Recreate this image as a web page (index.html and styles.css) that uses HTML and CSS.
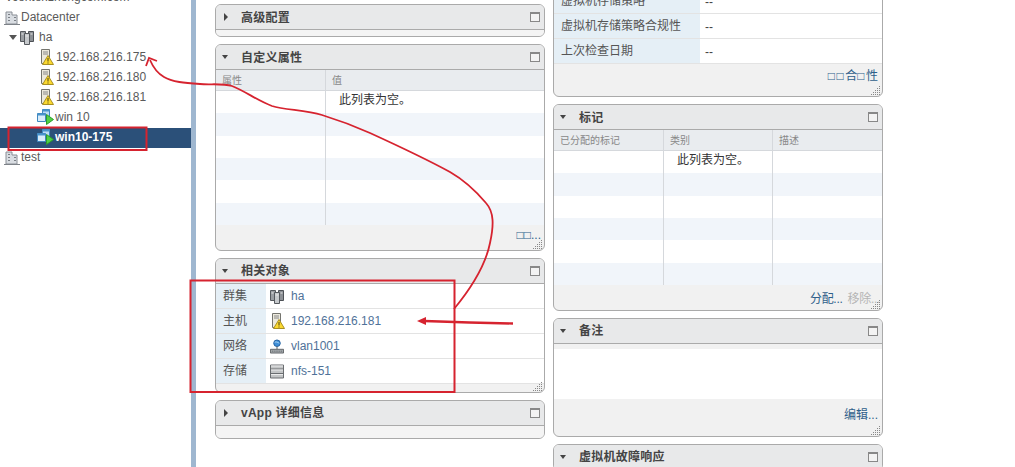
FILE: index.html
```html
<!DOCTYPE html>
<html lang="zh">
<head>
<meta charset="utf-8">
<title>vSphere</title>
<link rel="stylesheet" href="styles.css">
</head>
<body>
<svg class="defs" width="0" height="0" aria-hidden="true">
  <symbol id="i-dc" viewBox="0 0 16 16">
    <path d="M2 15V3h6v3h5v9z" fill="#d9dde2" stroke="#8a8f96"/>
    <path d="M0 15.500h16" stroke="#7d8288"/>
    <path d="M4 5h2v1H4zM4 8h2v1H4zM4 11h2v1H4zM10 8h2v1h-2zM10 11h2v1h-2z" fill="#7a7f86"/>
  </symbol>
  <symbol id="i-cluster" viewBox="0 0 14 15">
    <path d="M.5 1.500h5v10h-5z" fill="#9a9ea3" stroke="#55595e"/>
    <path d="M8.500 1.500h5v10h-5z" fill="#8c9095" stroke="#4d5156"/>
    <path d="M4.500 3.500h5v11h-5z" fill="#c6c9cc" stroke="#55595e"/>
    <path d="M1.500 4h2M10.500 4h2M5.500 6h3" stroke="#e8e8e8"/>
  </symbol>
  <symbol id="i-host" viewBox="0 0 13 16">
    <path d="M.5 .5h8v14h-8z" fill="#ece9dd" stroke="#74746e"/>
    <path d="M2 3h5M2 5h5" stroke="#888"/>
    <path d="M7 6.500l5.500 9h-11z" fill="#fbd92f" stroke="#a98f22" stroke-linejoin="round"/>
    <path d="M7 9v3.500M7 13.500v1" stroke="#4a3f10"/>
  </symbol>
  <symbol id="i-vm" viewBox="0 0 17 16">
    <path d="M5.500 .5h7v7h-7z" fill="#bcdcf4" stroke="#3f86bf"/>
    <path d="M.5 4.500h8v8h-8z" fill="#d8ecfa" stroke="#3f86bf"/>
    <path d="M.5 4.500h8v2h-8zM5.500 .5h7v2h-7z" fill="#4a94cc"/>
    <path d="M9.500 5.500l7 5-7 5z" fill="#4fcf45" stroke="#2c9d2a" stroke-linejoin="round"/>
  </symbol>
  <symbol id="i-net" viewBox="0 0 15 15">
    <circle cx="7.500" cy="4" r="3.500" fill="#3f8fd8" stroke="#23609e"/>
    <path d="M5 3c2-1 3 0 5 1" stroke="#a9d3f3" fill="none"/>
    <path d="M7.500 7.500v3" stroke="#555"/>
    <path d="M.5 10.500h14v4H.5z" fill="#a8adb0" stroke="#5e6265"/>
    <path d="M2 12.500h11" stroke="#50555a" stroke-dasharray="1 1"/>
  </symbol>
  <symbol id="i-store" viewBox="0 0 14 14">
    <path d="M.5 .5h13v13H.5z" fill="#c3c5c6" stroke="#6a6d70"/>
    <path d="M1 4.500h12M1 9h12" stroke="#6a6d70"/>
    <path d="M1 1.500h12M1 5.500h12M1 10h12" stroke="#ececec"/>
  </symbol>
  <symbol id="i-grip" viewBox="0 0 10 10">
    <path d="M8 1h1v1H8zM6 3h1v1H6zM8 3h1v1H8zM4 5h1v1H4zM6 5h1v1H6zM8 5h1v1H8zM2 7h1v1H2zM4 7h1v1H4zM6 7h1v1H6zM8 7h1v1H8zM0 9h1v1H0zM2 9h1v1H2zM4 9h1v1H4zM6 9h1v1H6zM8 9h1v1H8z" fill="#888"/>
  </symbol>
</svg>

<div class="page">
  <aside class="tree">
    <div class="node node-root">vcenter.zhengcom.com</div>
    <div class="node node-l1"><svg class="tree-ic"><use href="#i-dc"/></svg>Datacenter</div>
    <div class="node node-l2"><span class="tw"></span><svg class="tree-ic-s"><use href="#i-cluster"/></svg>ha</div>
    <div class="node node-l3"><svg class="tree-ic-h"><use href="#i-host"/></svg>192.168.216.175</div>
    <div class="node node-l3"><svg class="tree-ic-h"><use href="#i-host"/></svg>192.168.216.180</div>
    <div class="node node-l3"><svg class="tree-ic-h"><use href="#i-host"/></svg>192.168.216.181</div>
    <div class="node node-vm"><svg class="tree-ic-v"><use href="#i-vm"/></svg>win 10</div>
    <div class="node node-vm selected"><svg class="tree-ic-v"><use href="#i-vm"/></svg>win10-175</div>
    <div class="node node-l1"><svg class="tree-ic"><use href="#i-dc"/></svg>test</div>
  </aside>
  <div class="splitter"></div>
  <main class="columns">
    <section class="col">
      <div class="panel">
        <header class="ph"><span class="tri-r"></span><h2>高级配置</h2><span class="max"></span></header>
        <div class="stub"></div>
      </div>
      <div class="panel">
        <header class="ph"><span class="tri-d"></span><h2>自定义属性</h2><span class="max"></span></header>
        <div class="grid grid-2 gh"><span>属性</span><span>值</span></div>
        <div class="grid grid-2 gr"><span></span><span class="empty">此列表为空。</span></div>
        <div class="grid grid-2 gr alt"><span></span><span></span></div>
        <div class="grid grid-2 gr"><span></span><span></span></div>
        <div class="grid grid-2 gr alt"><span></span><span></span></div>
        <div class="grid grid-2 gr"><span></span><span></span></div>
        <div class="grid grid-2 gr alt"><span></span><span></span></div>
        <footer class="pf f-custom"><a>□□...</a></footer>
        <svg class="grip"><use href="#i-grip"/></svg>
      </div>
      <div class="panel">
        <header class="ph"><span class="tri-d"></span><h2>相关对象</h2><span class="max"></span></header>
        <div class="kv"><div class="k">群集</div><div class="v"><svg class="v-ic"><use href="#i-cluster"/></svg><a>ha</a></div></div>
        <div class="kv"><div class="k">主机</div><div class="v"><svg class="v-ic-h"><use href="#i-host"/></svg><a>192.168.216.181</a></div></div>
        <div class="kv"><div class="k">网络</div><div class="v"><svg class="v-ic"><use href="#i-net"/></svg><a>vlan1001</a></div></div>
        <div class="kv"><div class="k">存储</div><div class="v"><svg class="v-ic"><use href="#i-store"/></svg><a>nfs-151</a></div></div>
        <div class="f-rel"></div>
        <svg class="grip"><use href="#i-grip"/></svg>
      </div>
      <div class="panel">
        <header class="ph"><span class="tri-r"></span><h2>vApp 详细信息</h2><span class="max"></span></header>
        <div class="stub-v"></div>
      </div>
    </section>
    <section class="col col-right">
      <div class="panel">
        <div class="kv kv-wide"><div class="k">虚拟机存储策略</div><div class="v">--</div></div>
        <div class="kv kv-wide"><div class="k">虚拟机存储策略合规性</div><div class="v">--</div></div>
        <div class="kv kv-wide"><div class="k">上次检查日期</div><div class="v">--</div></div>
        <footer class="pf f-top"><a><span class="box">□□</span>合<span class="box">□</span>性</a></footer>
        <svg class="grip"><use href="#i-grip"/></svg>
      </div>
      <div class="panel">
        <header class="ph"><span class="tri-d"></span><h2>标记</h2><span class="max"></span></header>
        <div class="grid grid-3 gh"><span>已分配的标记</span><span>类别</span><span>描述</span></div>
        <div class="grid grid-3 gr"><span></span><span class="empty">此列表为空。</span><span></span></div>
        <div class="grid grid-3 gr alt"><span></span><span></span><span></span></div>
        <div class="grid grid-3 gr"><span></span><span></span><span></span></div>
        <div class="grid grid-3 gr alt"><span></span><span></span><span></span></div>
        <div class="grid grid-3 gr"><span></span><span></span><span></span></div>
        <div class="grid grid-3 gr alt"><span></span><span></span><span></span></div>
        <footer class="pf f-tags"><a>分配...</a><a class="off">移除...</a></footer>
        <svg class="grip"><use href="#i-grip"/></svg>
      </div>
      <div class="panel">
        <header class="ph"><span class="tri-d"></span><h2>备注</h2><span class="max"></span></header>
        <div class="note-gap"></div>
        <div class="note"></div>
        <footer class="pf f-note"><a>编辑...</a></footer>
        <svg class="grip"><use href="#i-grip"/></svg>
      </div>
      <div class="panel">
        <header class="ph"><span class="tri-d"></span><h2>虚拟机故障响应</h2><span class="max"></span></header>
      </div>
    </section>
  </main>
</div>

<svg class="marks" viewBox="0 0 1015 467" aria-hidden="true">
  <g fill="none" stroke="#d6232f">
    <path class="m2" d="M8.500 127.500h138v22.500h-138z"/>
    <path class="m2" d="M190.500 280.500h264v111.500h-264z"/>
    <path class="m1" d="M454 309C468 292 485 268 490 243C494 225 494 212 486 203C475 190 464 180 450 172C428 160 405 149 370 133C352 125 335 119 322 115C305 110 285 110 272 106C258 101 245 91 232 86C222 83 210 85 200 84C185 83 172 82 164 77C157 73 153 67 150 60"/>
    <path class="m1" d="M146 66L149 58L157 61"/>
    <path class="m3" d="M513 323.500C480 323 450 322 424 321"/>
  </g>
  <path d="M417 321L426 317V325Z" fill="#d6232f"/>
</svg>
</body>
</html>
```

FILE: styles.css
```css
html, body {
  margin: 0;
  height: 467px;
  overflow: hidden;
  background: #fff;
}
body {
  position: relative;
  font-family: "Liberation Sans", "Noto Sans CJK SC", sans-serif;
  font-size: 12px;
  color: #555;
}
.defs { position: absolute; }
.page { display: flex; height: 467px; overflow: hidden; }

/* tree */
.tree { width: 191px; flex: none; margin-top: -13px; }
.node {
  display: flex;
  align-items: center;
  height: 20px;
  white-space: nowrap;
  color: #5a5a5a;
}
.node-root { padding-left: 6px; }
.node-l1 { padding-left: 4px; }
.node-l2 { padding-left: 9px; }
.node-l3 { padding-left: 41px; }
.node-vm { padding-left: 37px; }
.selected {
  box-sizing: border-box;
  margin: 1px 0 -1px;
  padding-bottom: 2px;
  background: #2b5079;
  color: #fff;
  font-weight: bold;
}
.tree-ic { width: 16px; height: 16px; margin-right: 1px; }
.tree-ic-s { width: 14px; height: 15px; margin-right: 5px; }
.tree-ic-h { width: 13px; height: 16px; margin-right: 2px; }
.tree-ic-v { width: 17px; height: 16px; margin-right: 1px; }
.tw {
  width: 0; height: 0;
  margin-right: 3px;
  border-left: 4px solid transparent;
  border-right: 4px solid transparent;
  border-top: 5px solid #555;
}
.splitter { width: 5px; flex: none; background: #9fb7d0; }

/* columns */
.columns { display: flex; gap: 8px; padding: 4px 0 0 19px; align-items: flex-start; }
.col { width: 330px; flex: none; display: flex; flex-direction: column; gap: 7px; }
.col-right { margin-top: -16px; }

/* panels */
.panel {
  position: relative;
  flex: none;
  background: #f1f1f1;
  border: 1px solid #aaa;
  border-radius: 6px;
  overflow: hidden;
}
.ph {
  display: flex;
  align-items: center;
  height: 24px;
  padding: 0 3px 0 6px;
  background: #e8e9ea;
  border-bottom: 1px solid #aaa;
}
.ph h2 {
  flex: 1;
  margin: 0 0 2px 13px;
  font-size: 12px;
  letter-spacing: .25px;
  font-weight: bold;
  color: #444;
}
.tri-r { width: 0; height: 0; flex: none; margin: 0 0 0 2px; border-left: 4px solid #444; border-top: 4px solid transparent; border-bottom: 4px solid transparent; }
.tri-d { width: 0; height: 0; flex: none; margin: 0; border-top: 4px solid #444; border-left: 3.500px solid transparent; border-right: 3.500px solid transparent; }
.max {
  width: 8px;
  height: 7px;
  margin-right: 1px;
  border: 1px solid #888;
  border-top-width: 2px;
  background: #f3f3f3;
}
.stub { height: 6px; background: #f4f4f4; }
.stub-v { height: 12px; background: #f4f4f4; }

/* grids */
.grid { display: grid; }
.grid-2 { grid-template-columns: 109px 1fr; }
.grid-3 { grid-template-columns: 109px 109px 1fr; }
.grid > span { border-left: 1px solid #d5d8dc; }
.grid > span:first-child { border-left: 0; }
.gh {
  height: 21px;
  line-height: 21px;
  background: #e9ecef;
  font-size: 10px;
  color: #888;
  border-bottom: 1px solid #d5d8dc;
  box-sizing: border-box;
}
.gh > span { padding-left: 6px; }
.gr { height: 22.330px; background: #fff; }
.gr.alt { background: #f1f5fa; }
.empty { padding-left: 13px; line-height: 18px; color: #333; }

/* key value */
.kv { display: flex; height: 25px; box-sizing: border-box; background: #fff; border-bottom: 1px solid #e3e3e3; }
.k { width: 50px; flex: none; box-sizing: border-box; padding-left: 7px; line-height: 25px; font-size: 12px; background: #e5eff6; color: #555; }
.v { flex: 1; display: flex; align-items: center; padding: 1px 0 0 3px; box-sizing: border-box; }
.v a { color: #4f7299; }
.v-ic { width: 14px; height: 15px; margin-right: 7px; margin-left: 1px; }
.v-ic-h { width: 13px; height: 16px; margin-right: 6px; margin-left: 3px; }
.kv-wide .k { width: 146px; padding-left: 7px; }
.kv-wide .v { color: #444; padding-left: 5px; }
.f-rel { height: 8px; }

/* footers */
.pf { display: flex; justify-content: flex-end; gap: 5px; padding: 0 4px; align-items: center; box-sizing: border-box; color: #2f5f8a; }
.pf a { color: #2f5f8a; }
.pf a.off { color: #b5b5b5; }
.box { letter-spacing: 1.500px; }
.f-custom { height: 25px; padding-bottom: 5px; padding-right: 3px; }
.f-tags { height: 25px; gap: 5px; padding-right: 2px; }
.f-tags a { letter-spacing: -.3px; }
.f-top { height: 32px; padding-bottom: 12px; }
.note-gap { height: 5px; }
.note { height: 50px; background: #fff; }
.f-note { height: 37px; padding-bottom: 8px; }
.grip { position: absolute; right: 1px; bottom: 1px; width: 10px; height: 10px; }

/* annotations */
.marks { position: absolute; left: 0; top: 0; width: 1015px; height: 467px; pointer-events: none; }
.m1 { stroke-width: 1.800; }
.m2 { stroke-width: 2; }
.m3 { stroke-width: 2.400; }
```
